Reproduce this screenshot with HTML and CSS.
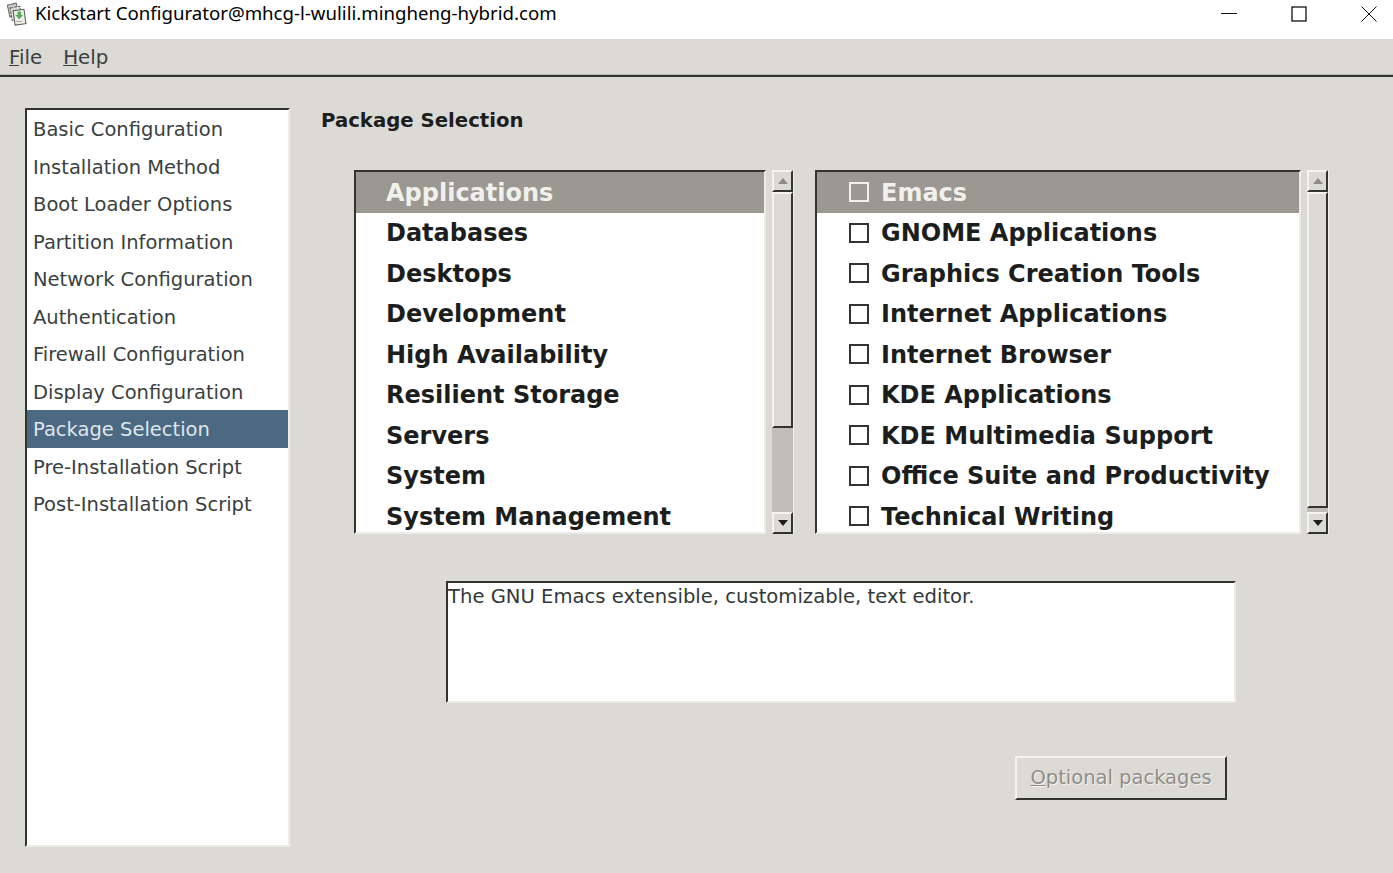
FILE: index.html
```html
<!DOCTYPE html>
<html lang="en">
<head>
<meta charset="utf-8">
<title>Kickstart Configurator</title>
<link rel="stylesheet" href="styles.css">
</head>
<body>
<header class="titlebar">
  <svg class="app-icon" width="20" height="24" viewBox="0 0 20 24">
    <rect x="1.500" y="2" width="9" height="12" transform="rotate(-12 6 8)" fill="#c9cbc6" stroke="#62665f"/>
    <rect x="4" y="5" width="10" height="13" transform="rotate(-10 9 11)" fill="#dadbd6" stroke="#62665f" stroke-dasharray="3 1"/>
    <rect x="7" y="8" width="11" height="14.500" transform="rotate(-8 12 15)" fill="#ecede9" stroke="#565a54"/>
    <path d="M10.500 9.500 h3.500 v3.500 h2.200 l-4 4.200 l-4 -4.200 h2.300 Z" fill="#58ad5f"/>
    <path d="M9 19.500 h6" stroke="#a9aca5"/>
  </svg>
  <span class="title-text">Kickstart Configurator@mhcg-l-wulili.mingheng-hybrid.com</span>
  <div class="window-controls">
    <svg width="16" height="16" viewBox="0 0 16 16"><path d="M0 7.500 H16" stroke="#111" fill="none"/></svg>
    <svg width="16" height="16" viewBox="0 0 16 16"><rect x="1" y="1" width="14" height="14" stroke="#111" fill="none" stroke-width="1.300"/></svg>
    <svg width="16" height="16" viewBox="0 0 16 16"><path d="M.500 .500 L15.500 15.500 M15.500 .500 L.500 15.500" stroke="#111" fill="none"/></svg>
  </div>
</header>
<nav class="menubar">
  <span class="menu-item"><u>F</u>ile</span>
  <span class="menu-item"><u>H</u>elp</span>
</nav>
<div class="workspace">
  <aside class="sidebar sunken">
    <div class="side-row">Basic Configuration</div>
    <div class="side-row">Installation Method</div>
    <div class="side-row">Boot Loader Options</div>
    <div class="side-row">Partition Information</div>
    <div class="side-row">Network Configuration</div>
    <div class="side-row">Authentication</div>
    <div class="side-row">Firewall Configuration</div>
    <div class="side-row">Display Configuration</div>
    <div class="side-row is-selected">Package Selection</div>
    <div class="side-row">Pre-Installation Script</div>
    <div class="side-row">Post-Installation Script</div>
  </aside>
  <main class="panel">
    <h1 class="panel-title">Package Selection</h1>
    <section class="lists">
      <div class="list group-list sunken">
        <div class="row is-active">Applications</div>
        <div class="row">Databases</div>
        <div class="row">Desktops</div>
        <div class="row">Development</div>
        <div class="row">High Availability</div>
        <div class="row">Resilient Storage</div>
        <div class="row">Servers</div>
        <div class="row">System</div>
        <div class="row">System Management</div>
      </div>
      <div class="scrollbar">
        <div class="sb-btn"><span class="arrow-up"></span></div>
        <div class="sb-thumb thumb-short"></div>
        <div class="sb-fill"></div>
        <div class="sb-btn"><span class="arrow-down"></span></div>
      </div>
      <div class="list item-list sunken">
        <div class="row is-active"><span class="check"></span>Emacs</div>
        <div class="row"><span class="check"></span>GNOME Applications</div>
        <div class="row"><span class="check"></span>Graphics Creation Tools</div>
        <div class="row"><span class="check"></span>Internet Applications</div>
        <div class="row"><span class="check"></span>Internet Browser</div>
        <div class="row"><span class="check"></span>KDE Applications</div>
        <div class="row"><span class="check"></span>KDE Multimedia Support</div>
        <div class="row"><span class="check"></span>Office Suite and Productivity</div>
        <div class="row"><span class="check"></span>Technical Writing</div>
      </div>
      <div class="scrollbar">
        <div class="sb-btn"><span class="arrow-up"></span></div>
        <div class="sb-thumb thumb-long"></div>
        <div class="sb-fill"></div>
        <div class="sb-btn"><span class="arrow-down"></span></div>
      </div>
    </section>
    <div class="description sunken">The GNU Emacs extensible, customizable, text editor.</div>
    <div class="actions">
      <button class="optional" type="button" disabled><u>O</u>ptional packages</button>
    </div>
  </main>
</div>
</body>
</html>
```

FILE: styles.css
```css
* { box-sizing: border-box; }
html, body { margin: 0; padding: 0; }
body {
  width: 1393px;
  height: 873px;
  overflow: hidden;
  background: #dcdad5;
  font-family: "DejaVu Sans", sans-serif;
  color: #2e3436;
}
.titlebar {
  height: 39px;
  background: #fff;
  display: flex;
  align-items: center;
  padding-left: 7px;
  padding-bottom: 12px;
}
.app-icon { flex: none; }
.title-text {
  margin-left: 8px;
  margin-bottom: 2px;
  font-family: "Noto Sans", sans-serif;
  font-size: 18.650px;
  color: #000;
}
.window-controls {
  margin-left: auto;
  display: flex;
  gap: 54px;
  padding-right: 16px;
}
.menubar {
  height: 38px;
  display: flex;
  gap: 21px;
  align-items: center;
  padding: 1px 0 0 9px;
  font-size: 19.800px;
  color: #3b3f3f;
  border-bottom: 2px solid #33332f;
  box-shadow: inset 0 -1px 0 #b5b3ad;
}
.workspace {
  display: flex;
  padding: 31px 0 0 25px;
}
.sunken {
  background: #fff;
  border: 2px solid;
  border-color: #33332f #eeece9 #eeece9 #33332f;
}
.sidebar {
  width: 265px;
  height: 739px;
  padding: 0;
  font-size: 19.500px;
  flex: none;
}
.side-row {
  height: 37.500px;
  line-height: 37.500px;
  padding: 1px 0 0 6px;
  white-space: nowrap;
  color: #3a3f41;
}
.side-row.is-selected {
  background: #4b6983;
  color: #dfe5ea;
}
.panel {
  margin-left: 31px;
  width: 1030px;
}
.panel-title {
  margin: 0;
  height: 24px;
  font-size: 19.700px;
  line-height: 26px;
  font-weight: 700;
  color: #1c1e1e;
}
.lists {
  display: flex;
  margin: 38px 0 0 33px;
  height: 364px;
}
.list {
  padding: 0;
  overflow: hidden;
  font-size: 24px;
  font-weight: 700;
  color: #1c1e1e;
}
.group-list { width: 412px; }
.item-list { width: 486px; margin-left: 21px; }
.row {
  height: 40.500px;
  padding-top: 1px;
  white-space: nowrap;
  display: flex;
  align-items: center;
}
.group-list .row { padding-left: 30px; }
.item-list .row { padding-left: 32px; }
.row.is-active {
  background: #9a9890;
  color: #f1f0ed;
}
.check {
  flex: none;
  width: 20px;
  height: 20px;
  margin: -1px 12px 0 0;
  background: #fff;
  border: 2px solid #33332f;
}
.is-active .check {
  background: #9a9890;
  border-color: #f1f0ed;
}
.scrollbar {
  width: 22px;
  margin-left: 6px;
  display: flex;
  flex-direction: column;
  background: #c0beb7;
  border-right: 1px solid #f0efec;
  flex: none;
}
.sb-btn {
  height: 22px;
  flex: none;
  background: #dcdad5;
  border: 2px solid;
  border-color: #f4f3f1 #33332f #33332f #f4f3f1;
  display: flex;
  align-items: center;
  justify-content: center;
}
.arrow-up {
  width: 0;
  height: 0;
  border: 5.500px solid transparent;
  border-top: 0;
  border-bottom: 6px solid #8e8c85;
}
.arrow-down {
  width: 0;
  height: 0;
  border: 5.500px solid transparent;
  border-bottom: 0;
  border-top: 6px solid #1d1d1b;
}
.sb-thumb {
  flex: none;
  background: #dcdad5;
  border: 2px solid;
  border-color: #f4f3f1 #33332f #33332f #f4f3f1;
}
.thumb-short { height: 236px; }
.thumb-long { height: 316px; }
.sb-fill { flex: 1; }
.description {
  width: 790px;
  height: 122px;
  margin: 47px 0 0 125px;
  padding: 1px 0 0;
  font-size: 19.600px;
  line-height: 25px;
  color: #33383a;
}
.actions {
  display: flex;
  justify-content: flex-end;
  width: 906px;
  margin-top: 53px;
}
.optional {
  width: 212px;
  height: 44px;
  padding: 0 0 2px;
  font-family: inherit;
  font-size: 19.500px;
  color: #8f8e88;
  text-shadow: 1px 1px 0 #f4f3f1;
  background: #dcdad5;
  border: 2px solid;
  border-color: #f4f3f1 #33332f #33332f #f4f3f1;
}
```
